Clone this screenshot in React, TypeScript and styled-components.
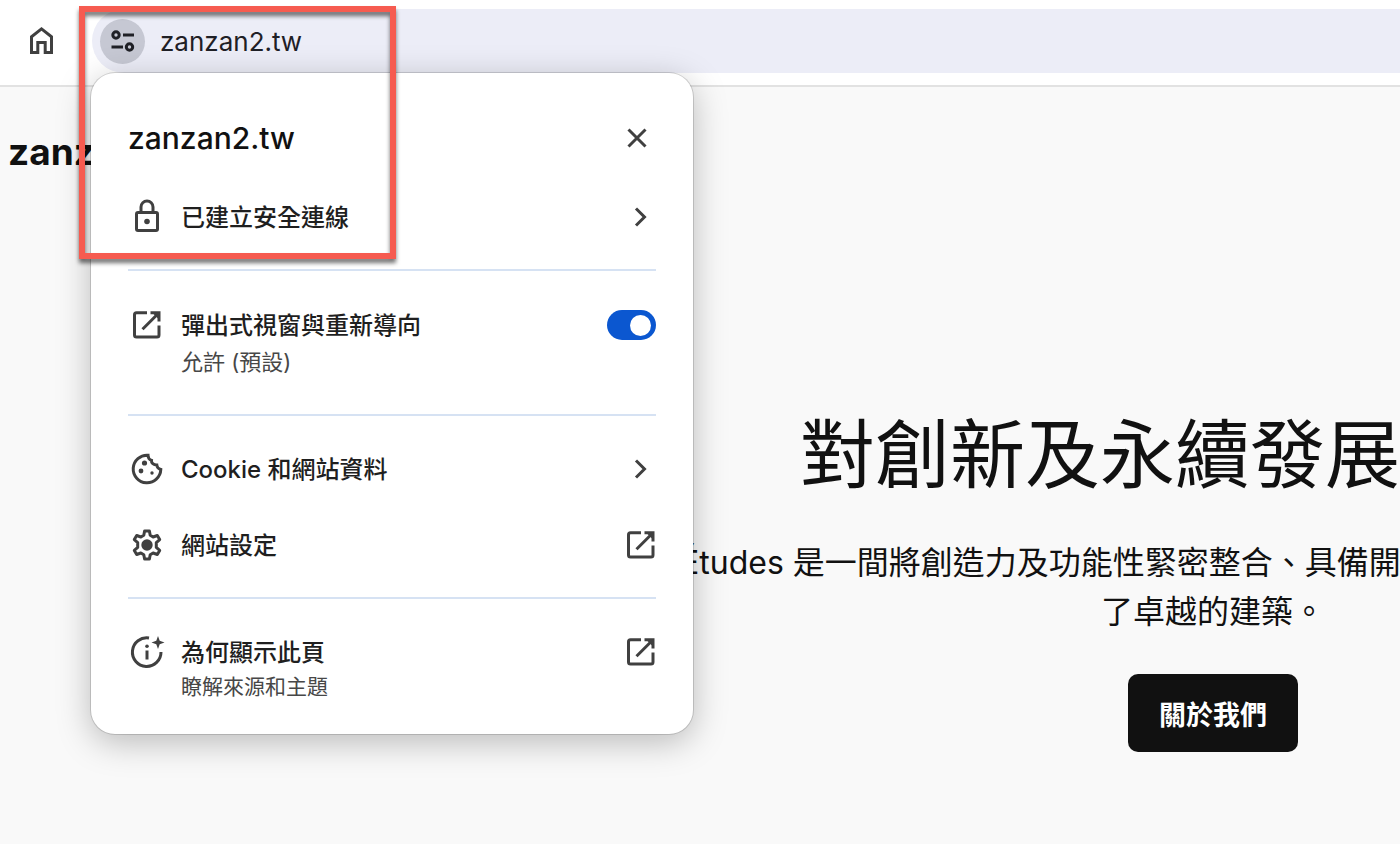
import React from "react";
import styled, { createGlobalStyle } from "styled-components";

const Global = createGlobalStyle`
  * { box-sizing: border-box; }
  html, body { margin: 0; padding: 0; }
  body {
    background: #f9f9f9;
    font-family: Inter, "Noto Sans CJK TC", sans-serif;
    color: #111;
    overflow: hidden;
  }
  button { font-family: inherit; color: inherit; border: 0; background: none; padding: 0; cursor: pointer; }
  h1, h2, p { margin: 0; }
`;

const Window = styled.div`
  position: relative;
  min-height: 100vh;
  overflow: hidden;
`;

const Toolbar = styled.header`
  display: flex;
  padding-top: 9px;
  height: 87px;
  background: #fff;
  border-bottom: 2px solid #e2e2e2;
`;

const HomeButton = styled.button`
  display: flex;
  width: 92px;
  height: 64px;
  padding-left: 24px;
  align-items: center;
`;

const AddressBar = styled.div`
  display: flex;
  flex: 1;
  align-items: center;
  gap: 15px;
  height: 64px;
  padding-left: 8px;
  background: #ecedf7;
  border-radius: 32px 0 0 32px;
`;

const SiteInfoButton = styled.button`
  display: grid;
  place-items: center;
  width: 45px;
  height: 45px;
  border-radius: 50%;
  background: #c6c8d3;
`;

const AddressInput = styled.input`
  flex: 1;
  border: 0;
  outline: 0;
  padding: 2px 0 0;
  background: none;
  font: 400 26px/32px Inter, sans-serif;
  color: #1f2026;
`;

const SiteTitle = styled.p`
  padding: 42px 0 0 8px;
  font-size: 37px;
  line-height: 46px;
  font-weight: 700;
`;

const Hero = styled.main`
  display: flex;
  flex-direction: column;
  width: 1066px;
  margin-left: 680px;
  padding-top: 232px;
  white-space: nowrap;
`;

const HeroTitle = styled.h1`
  padding-left: 120px;
  font-size: 75px;
  line-height: 96px;
  font-weight: 400;
`;

const HeroText = styled.p`
  padding-top: 35px;
  font-size: 32px;
  line-height: 49px;
`;

const CenteredLine = styled.span`
  display: block;
  text-align: center;
`;

const HeroButton = styled.button`
  align-self: center;
  margin-top: 38px;
  padding: 0 31px;
  height: 78px;
  border-radius: 10px;
  background: #111;
  color: #fff;
  font-size: 27px;
  font-weight: 600;
`;

const Popup = styled.section`
  position: absolute;
  top: 73px;
  left: 91px;
  width: 602px;
  padding: 38px 37px 31px;
  border-radius: 24px;
  background: #fff;
  box-shadow: 0 0 0 1px rgba(0, 0, 0, 0.14), 0 8px 34px rgba(0, 0, 0, 0.26);
`;

const PopupHeader = styled.div`
  display: flex;
  align-items: center;
  justify-content: space-between;
  height: 54px;
  margin-bottom: 14px;
  padding-right: 6px;
`;

const PopupTitle = styled.h2`
  font-size: 30px;
  line-height: 40px;
  font-weight: 500;
`;

const Group = styled.div<{ $pad: string }>`
  padding: ${(p) => p.$pad};
  & + & { border-top: 2px solid #d6e2f3; }
`;

const Row = styled.button<{ $height?: number }>`
  display: grid;
  grid-template-columns: 38px 1fr auto;
  column-gap: 15px;
  align-items: center;
  width: 100%;
  height: ${(p) => p.$height ?? 76}px;
  text-align: left;
`;

const SettingRow = styled(Row).attrs({ as: "label" })`
  cursor: pointer;
`;

const Label = styled.span`
  padding-top: 2px;
  font-size: 24px;
  line-height: 36px;
  font-weight: 500;
  color: #1f1f1f;
`;

const Note = styled.p<{ $size: number }>`
  padding: 2px 0 0 53px;
  font-size: ${(p) => p.$size}px;
  line-height: 32px;
  color: #474747;
`;

const Icon = styled.svg<{ $size: number; $dark?: boolean }>`
  display: block;
  width: ${(p) => p.$size}px;
  height: ${(p) => p.$size}px;
  fill: none;
  stroke: ${(p) => (p.$dark ? "#1f2026" : "#404040")};
  stroke-width: 3;
`;

const Switch = styled.input`
  appearance: none;
  display: flex;
  align-items: center;
  justify-content: flex-end;
  width: 49px;
  height: 30px;
  margin: 0;
  padding: 0 5px;
  border-radius: 15px;
  background: #0b57d0;
  &::before {
    content: "";
    width: 21px;
    height: 21px;
    border-radius: 50%;
    background: #fff;
  }
  &:not(:checked) { justify-content: flex-start; background: #8a8d91; }
`;

const Highlight = styled.div`
  position: absolute;
  top: 6px;
  left: 79px;
  width: 317px;
  height: 253px;
  border: 6px solid #f65b50;
  filter: drop-shadow(0 4px 2px rgba(0, 0, 0, 0.55));
  pointer-events: none;
`;

const HomeIcon = () => (
  <Icon $size={34} viewBox="0 0 34 34">
    <path d="M7.5 28.5V12.7L17.5 4.800L27.500 12.7V28.500H21.200V18.500H13.800V28.500Z" />
  </Icon>
);

const TuneIcon = () => (
  <Icon $size={30} $dark viewBox="0 0 30 30">
    <circle cx="8" cy="9" r="3.200" />
    <path d="M15 9H26M3.500 21H15" />
    <circle cx="21.500" cy="21" r="3.200" />
  </Icon>
);

const CloseIcon = () => (
  <Icon $size={26} viewBox="0 0 26 26">
    <path d="M4.500 4.500L21.500 21.500M21.500 4.500L4.500 21.500" />
  </Icon>
);

const LockIcon = () => (
  <Icon $size={38} viewBox="0 0 38 38">
    <rect x="8.500" y="14.500" width="21" height="18" rx="1.500" />
    <path d="M13 14.500V9a6 6 0 0 1 12 0V14.500" />
    <circle cx="19" cy="23.500" r="2.800" fill="#404040" stroke="none" />
  </Icon>
);

const ChevronIcon = () => (
  <Icon $size={30} viewBox="0 0 30 30">
    <path d="M10 6.500L18.500 15L10 23.500" />
  </Icon>
);

const OpenIcon = () => (
  <Icon $size={30} viewBox="0 0 30 30">
    <path d="M15 2.800H4.500a2 2 0 0 0-2 2V25a2 2 0 0 0 2 2H25a2 2 0 0 0 2-2V15.500" />
    <path d="M18.500 2.800H27V11.500M27 2.800L10.500 19.300" />
    <path d="M20 2.500H27.500V10Z" fill="#404040" stroke="none" />
  </Icon>
);

const CookieIcon = () => (
  <Icon $size={38} viewBox="0 0 38 38">
    <path d="M20 5.200A13.800 13.800 0 1 0 32.800 19.500C30.500 19 29 17.500 28.800 15C25.500 15 23.200 13 23.500 10.300C21.300 9.500 20 7.700 20 5.200Z" />
    <circle cx="16.500" cy="13" r="2.600" fill="#404040" stroke="none" />
    <circle cx="13" cy="21" r="2.400" fill="#404040" stroke="none" />
    <circle cx="24" cy="23" r="1.700" fill="#404040" stroke="none" />
  </Icon>
);

const GearIcon = () => (
  <Icon $size={38} viewBox="0 0 38 38">
    <path
      strokeLinejoin="round"
      d="M16.600 5H21.400L22.200 9.300L25.100 11L29.300 9.500L31.700 13.600L28.300 16.600V21.400L31.700 24.400L29.300 28.500L25.100 27L22.200 28.700L21.400 33H16.600L15.800 28.700L12.900 27L8.700 28.500L6.300 24.400L9.700 21.400V16.600L6.300 13.600L8.700 9.500L12.900 11L15.800 9.300Z"
    />
    <circle cx="19" cy="19" r="5.700" fill="#404040" stroke="none" />
  </Icon>
);

const InfoSparkIcon = () => (
  <Icon $size={38} viewBox="0 0 38 38">
    <path d="M21 5A14.300 14.300 0 1 0 33 19" />
    <path d="M19 17.500V26.500" />
    <circle cx="19" cy="13.200" r="1.800" fill="#404040" stroke="none" />
    <path d="M30 3L31.700 7.800L36.500 9.500L31.700 11.200L30 16L28.300 11.200L23.500 9.500L28.300 7.800Z" fill="#404040" stroke="none" />
  </Icon>
);

const IconCell = styled.span`
  display: grid;
  place-items: center;
`;

export default function App() {
  return (
    <Window>
      <Global />
      <Toolbar>
        <HomeButton aria-label="首頁"><HomeIcon /></HomeButton>
        <AddressBar>
          <SiteInfoButton aria-label="網站資訊"><TuneIcon /></SiteInfoButton>
          <AddressInput aria-label="網址" defaultValue="zanzan2.tw" />
        </AddressBar>
      </Toolbar>

      <SiteTitle>zanz</SiteTitle>
      <Hero>
        <HeroTitle>對創新及永續發展</HeroTitle>
        <HeroText>
          Études 是一間將創造力及功能性緊密整合、具備開創
          <CenteredLine>了卓越的建築。</CenteredLine>
        </HeroText>
        <HeroButton>關於我們</HeroButton>
      </Hero>

      <Popup>
        <Group $pad="0 0 14px">
          <PopupHeader>
            <PopupTitle>zanzan2.tw</PopupTitle>
            <button aria-label="關閉"><CloseIcon /></button>
          </PopupHeader>
          <Row>
            <IconCell><LockIcon /></IconCell>
            <Label>已建立安全連線</Label>
            <IconCell><ChevronIcon /></IconCell>
          </Row>
        </Group>
        <Group $pad="35px 0 36px">
          <SettingRow $height={38}>
            <IconCell><OpenIcon /></IconCell>
            <Label>彈出式視窗與重新導向</Label>
            <Switch type="checkbox" defaultChecked />
          </SettingRow>
          <Note $size={22}>允許 (預設)</Note>
        </Group>
        <Group $pad="15px 0 14px">
          <Row>
            <IconCell><CookieIcon /></IconCell>
            <Label>Cookie 和網站資料</Label>
            <IconCell><ChevronIcon /></IconCell>
          </Row>
          <Row>
            <IconCell><GearIcon /></IconCell>
            <Label>網站設定</Label>
            <IconCell><OpenIcon /></IconCell>
          </Row>
        </Group>
        <Group $pad="34px 0 0">
          <Row $height={36}>
            <IconCell><InfoSparkIcon /></IconCell>
            <Label>為何顯示此頁</Label>
            <IconCell><OpenIcon /></IconCell>
          </Row>
          <Note $size={21}>瞭解來源和主題</Note>
        </Group>
      </Popup>

      <Highlight />
    </Window>
  );
}
